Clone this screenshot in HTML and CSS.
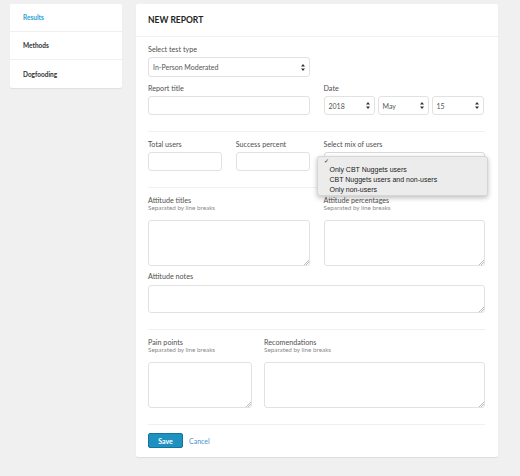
FILE: index.html
```html
<!DOCTYPE html>
<html>
<head>
<meta charset="utf-8">
<link rel="stylesheet" href="styles.css">
</head>
<body>
<div class="page">
  <nav class="sidebar">
    <a class="nav-item active">Results</a>
    <a class="nav-item">Methods</a>
    <a class="nav-item">Dogfooding</a>
  </nav>
  <main class="card">
    <div class="card-head">NEW REPORT</div>
    <form class="card-body">
      <section class="section">
        <div class="grid-2">
          <div class="field">
            <label class="label">Select test type</label>
            <div class="select">
              <span class="select-text">In-Person Moderated</span>
              <svg class="arrows" viewBox="0 0 4 7" width="4" height="7"><path d="M2 0L4 2.6H0Z M2 7L4 4.4H0Z" fill="#333"/></svg>
            </div>
          </div>
        </div>
        <div class="grid-2 row-gap">
          <div class="field">
            <label class="label">Report title</label>
            <div class="input"></div>
          </div>
          <div class="field">
            <label class="label">Date</label>
            <div class="date-grid">
              <div class="select short-sel"><span class="select-text">2018</span><svg class="arrows" viewBox="0 0 4 7" width="4" height="7"><path d="M2 0L4 2.6H0Z M2 7L4 4.4H0Z" fill="#333"/></svg></div>
              <div class="select short-sel"><span class="select-text">May</span><svg class="arrows" viewBox="0 0 4 7" width="4" height="7"><path d="M2 0L4 2.6H0Z M2 7L4 4.4H0Z" fill="#333"/></svg></div>
              <div class="select short-sel"><span class="select-text">15</span><svg class="arrows" viewBox="0 0 4 7" width="4" height="7"><path d="M2 0L4 2.6H0Z M2 7L4 4.4H0Z" fill="#333"/></svg></div>
            </div>
          </div>
        </div>
      </section>
      <section class="section">
        <div class="grid-2">
          <div class="grid-2">
            <div class="field">
              <label class="label">Total users</label>
              <div class="input"></div>
            </div>
            <div class="field">
              <label class="label">Success percent</label>
              <div class="input"></div>
            </div>
          </div>
          <div class="field">
            <label class="label">Select mix of users</label>
            <div class="select short-sel mix">
              <span class="select-text"></span>
              <svg class="arrows" viewBox="0 0 4 7" width="4" height="7"><path d="M2 0L4 2.6H0Z M2 7L4 4.4H0Z" fill="#333"/></svg>
              <div class="menu">
                <div class="menu-check">✓</div>
                <div class="menu-opt">Only CBT Nuggets users</div>
                <div class="menu-opt">CBT Nuggets users and non-users</div>
                <div class="menu-opt">Only non-users</div>
              </div>
            </div>
          </div>
        </div>
      </section>
      <section class="section">
        <div class="grid-2">
          <div class="field">
            <label class="label">Attitude titles</label>
            <span class="hint">Separated by line breaks</span>
            <textarea class="textarea tall"></textarea>
          </div>
          <div class="field">
            <label class="label">Attitude percentages</label>
            <span class="hint">Separated by line breaks</span>
            <textarea class="textarea tall"></textarea>
          </div>
        </div>
        <div class="field notes">
          <label class="label">Attitude notes</label>
          <textarea class="textarea short"></textarea>
        </div>
      </section>
      <section class="section">
        <div class="grid-pain">
          <div class="field">
            <label class="label">Pain points</label>
            <span class="hint">Separated by line breaks</span>
            <textarea class="textarea tall"></textarea>
          </div>
          <div class="field">
            <label class="label">Recomendations</label>
            <span class="hint">Separated by line breaks</span>
            <textarea class="textarea tall"></textarea>
          </div>
        </div>
      </section>
      <div class="actions">
        <button type="button" class="btn-save">Save</button>
        <a class="cancel">Cancel</a>
      </div>
    </form>
  </main>
</div>
</body>
</html>
```
FILE: styles.css
```css
* { box-sizing: border-box; }
html, body { margin: 0; padding: 0; }
body {
  background: #f0f0f0;
  font-family: Lato, "Noto Sans", sans-serif;
  color: #444;
  width: 520px;
  height: 476px;
  overflow: hidden;
}
.page {
  display: flex;
  align-items: flex-start;
  gap: 14px;
  padding: 4px 0 0 10px;
}
.sidebar {
  width: 112px;
  background: #fff;
  border-radius: 2px;
  box-shadow: 0 1px 1px rgba(0,0,0,0.07);
  display: flex;
  flex-direction: column;
}
.nav-item {
  height: 28px;
  display: flex;
  align-items: center;
  padding-left: 13px;
  font-size: 6.5px;
  font-weight: 700;
  color: #333;
  border-bottom: 1px solid #f0f0f0;
}
.nav-item:last-child { border-bottom: none; }
.nav-item.active { color: #2b9fd3; }
.card {
  width: 362px;
  background: #fff;
  border-radius: 2px;
  box-shadow: 0 1px 1px rgba(0,0,0,0.08);
}
.card-head {
  height: 33px;
  display: flex;
  align-items: center;
  padding-left: 12px;
  font-size: 8.5px;
  font-weight: 700;
  color: #222;
  border-bottom: 1px solid #f0f0f0;
}
.card-body {
  margin: 0;
  padding: 0 13px 9px 12px;
}
.section {
  padding: 8px 0 16px;
  border-bottom: 1px solid #f0f0f0;
}
.grid-2 {
  display: grid;
  grid-template-columns: 1fr 1fr;
  column-gap: 14px;
}
.row-gap { margin-top: 7px; }
.grid-pain {
  display: grid;
  grid-template-columns: 104px 1fr;
  column-gap: 12px;
}
.field {
  display: flex;
  flex-direction: column;
  min-width: 0;
}
.label {
  display: block;
  font-size: 7.2px;
  line-height: 10px;
  height: 10px;
  color: #505050;
  margin-bottom: 2px;
}
.hint {
  display: block;
  font-size: 6.3px;
  line-height: 8px;
  height: 8px;
  color: #8a8a8a;
  margin-top: -4px;
  margin-bottom: 8px;
}
.input, .select, .textarea {
  border: 1px solid #e2e2e2;
  border-radius: 3px;
  background: #fff;
}
.input { height: 19px; }
.select {
  height: 20px;
  position: relative;
  display: flex;
  align-items: center;
  padding: 0 4px;
}
.select.short-sel { height: 19px; }
.select-text {
  flex: 1;
  font-size: 7px;
  color: #555;
}
.arrows { display: block; flex: none; }
.date-grid {
  display: grid;
  grid-template-columns: 51px 51px 52px;
  column-gap: 3px;
}
.textarea {
  display: block;
  width: 100%;
  margin: 0;
  padding: 0;
  font: inherit;
  resize: vertical;
  outline: none;
}
.textarea::-webkit-resizer {
  background: linear-gradient(135deg, transparent 0 82%, #bdbdbd 82% 85.5%, transparent 85.5% 89%, #bdbdbd 89% 92.5%, transparent 92.5%);
}
.textarea.tall { height: 46px; }
.textarea.short { height: 28px; }
.notes { margin-top: 6px; }
.notes .label { margin-bottom: 3px; }
.mix { border-color: #d8d8d8; }
.menu {
  position: absolute;
  left: -8px;
  top: 3px;
  width: 171px;
  height: 40px;
  background: #ececec;
  border: 1px solid #d6d6d6;
  border-radius: 3px;
  box-shadow: 0 2px 5px rgba(0,0,0,0.25);
  font-family: "Liberation Sans", Arial, sans-serif;
  font-size: 7px;
  color: #222;
  padding: 1px 0 0 6px;
  z-index: 5;
}
.menu-check { line-height: 7px; height: 7px; font-size: 6px; }
.menu-opt { line-height: 9.8px; padding-left: 6px; }
.actions {
  display: flex;
  align-items: center;
  gap: 6px;
  padding-top: 8px;
}
.btn-save {
  width: 35px;
  height: 15px;
  padding: 0;
  background: #1d91c0;
  border: 1px solid #16749c;
  border-radius: 2px;
  color: #fff;
  font-family: Lato, sans-serif;
  font-size: 7px;
  font-weight: 700;
}
.cancel {
  font-size: 7px;
  color: #4a91d2;
}
```
